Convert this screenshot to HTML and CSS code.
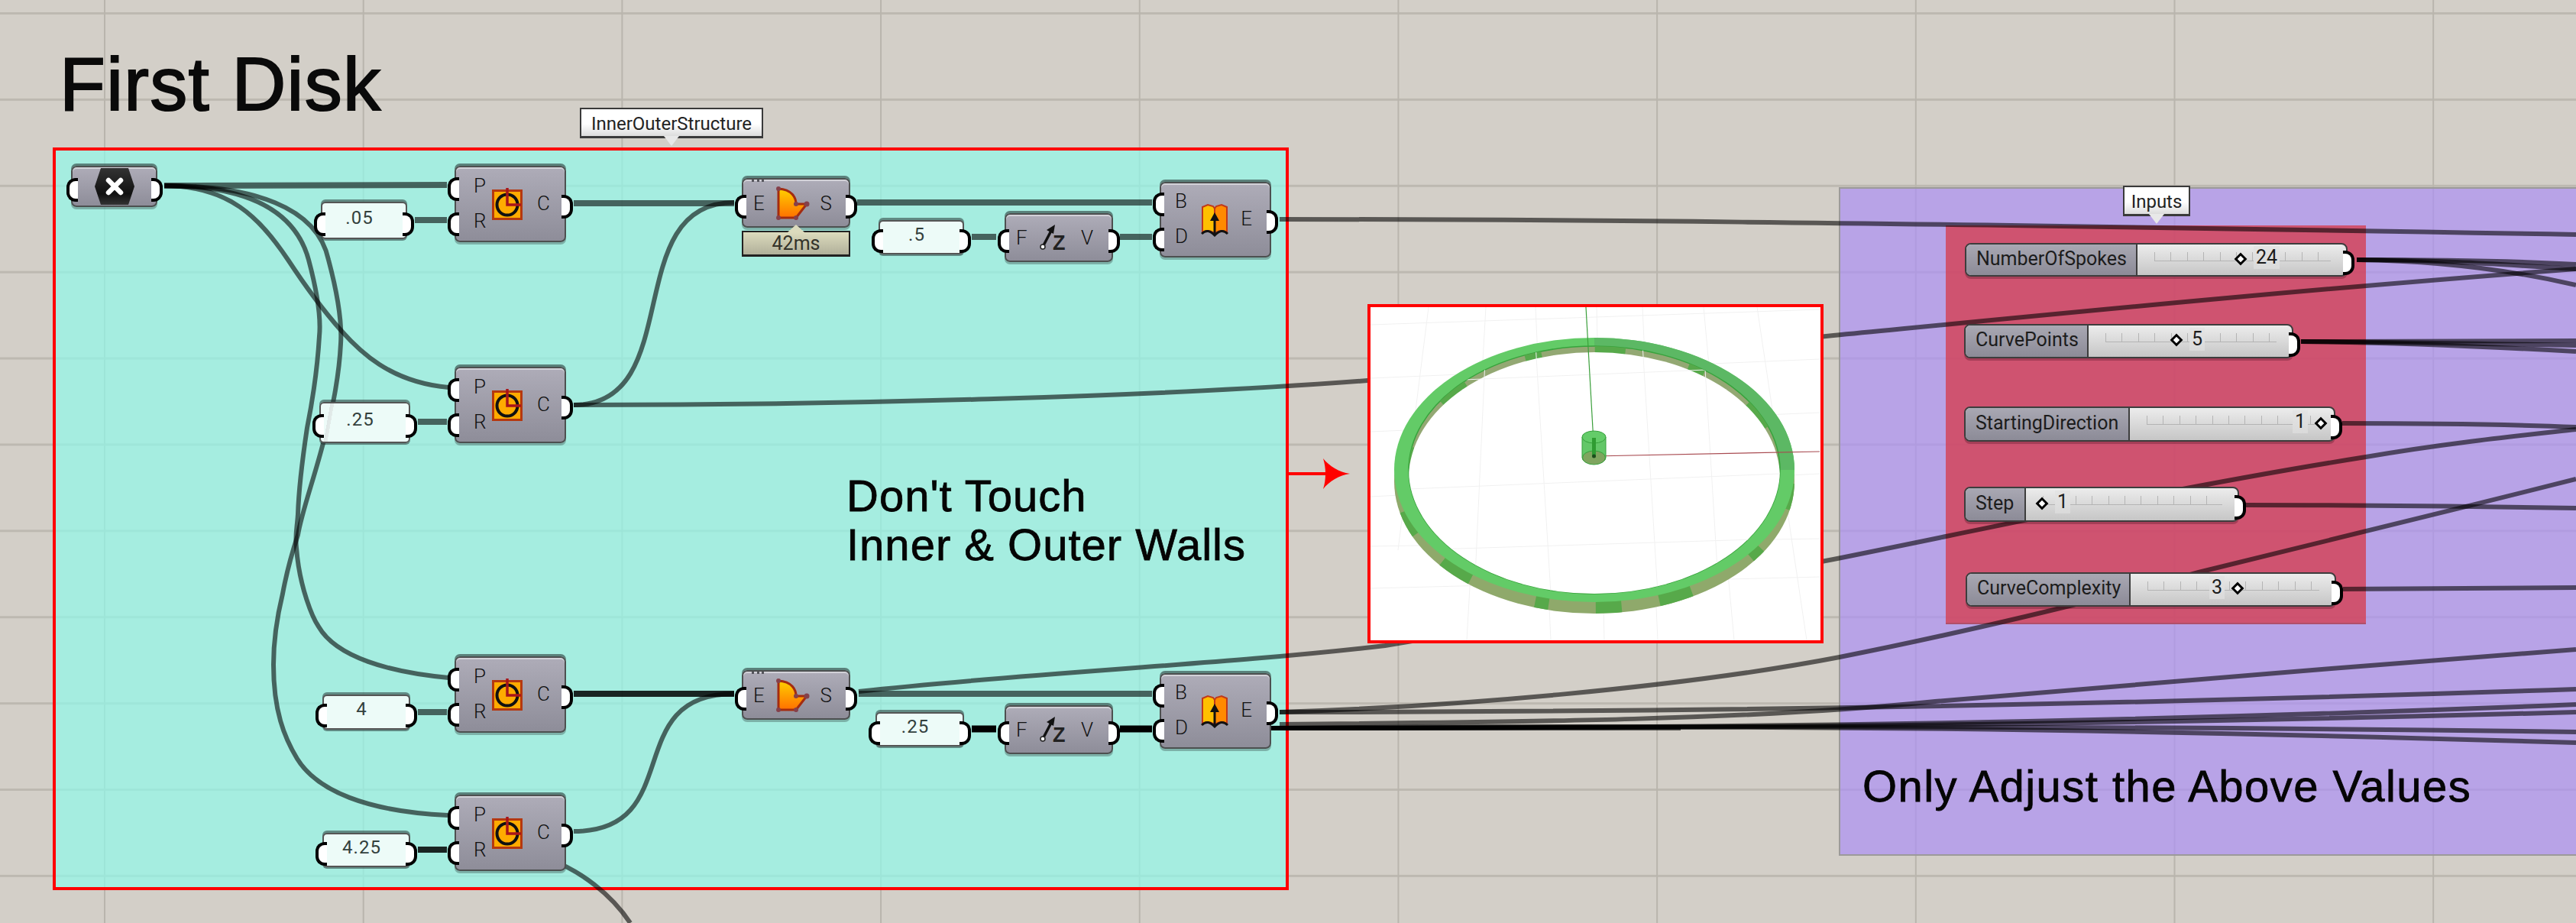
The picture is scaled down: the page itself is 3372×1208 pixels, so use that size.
FILE: index.html
```html
<!DOCTYPE html>
<html lang="en">
<head>
    <meta charset="UTF-8">
    <title>First Disk</title>
    <link rel="stylesheet" href="styles.css">
</head>
<body>
<svg class="sprites" width="0" height="0">
    <defs>
        <linearGradient id="amber" x1="0" y1="0" x2="0" y2="1">
            <stop offset="0" stop-color="#ffd000"/>
            <stop offset="1" stop-color="#ff7000"/>
        </linearGradient>
        <linearGradient id="hexfill" x1="0" y1="0" x2="0" y2="1">
            <stop offset="0" stop-color="#333"/>
            <stop offset=".7" stop-color="#111"/>
            <stop offset="1" stop-color="#333"/>
        </linearGradient>
        <clipPath id="holeclip"><ellipse cx="2087" cy="615" rx="243" ry="162"/></clipPath>
        <clipPath id="lowerclip"><ellipse cx="2087" cy="630" rx="262" ry="173"/></clipPath>
    </defs>
    <symbol id="ic-circle" viewBox="0 0 40 44">
        <rect x="1.5" y="4.5" width="37" height="37" fill="#ffab00" stroke="#b5380f" stroke-width="3"/>
        <circle cx="20" cy="23" r="13.5" fill="none" stroke="#111" stroke-width="4"/>
        <path d="M20 1V23H38" fill="none" stroke="#a8141a" stroke-width="3.5"/>
    </symbol>
    <symbol id="ic-eval" viewBox="0 0 48 46">
        <path d="M6 4C24 5 29 16 29 24L43 24L29 42H6Z" fill="url(#amber)" stroke="#a32c10" stroke-width="3" stroke-linejoin="round"/>
        <g fill="#85404a"><circle cx="6" cy="4" r="3"/><circle cx="29" cy="24" r="3"/><circle cx="43" cy="24" r="3.5"/><circle cx="29" cy="42" r="3"/><circle cx="6" cy="42" r="3"/></g>
    </symbol>
    <symbol id="ic-move" viewBox="0 0 36 34">
        <path d="M4 29L15 8" stroke="#111" stroke-width="3.5"/>
        <path d="M20 0L9 7L18 12Z" fill="#111"/>
        <circle cx="4" cy="29" r="3" fill="#fff" stroke="#222" stroke-width="1.5"/>
    </symbol>
    <symbol id="ic-book" viewBox="0 0 36 44">
        <path d="M2 5L9 2L16 4L18 7V39L16 38C11 35 7 35 2 38Z" fill="#ffc000" stroke="#c0391b" stroke-width="2"/>
        <path d="M34 5L27 2L20 4L18 7V39L20 38C25 35 29 35 34 38Z" fill="#ff8a00" stroke="#c0391b" stroke-width="2"/>
        <path d="M1 40C7 34 12 36 18 42C24 36 29 34 35 40" fill="none" stroke="#111" stroke-width="3"/>
        <path d="M18 42V20" stroke="#111" stroke-width="3"/>
        <path d="M18 12L12 23H24Z" fill="#111"/>
    </symbol>
</svg>

<div class="canvas">
    <div class="group group-teal"></div>
    <div class="group group-purple"></div>
    <div class="group group-red"></div>

    <svg class="wires" width="3372" height="1208" viewBox="0 0 3372 1208">
        <!-- from the hexagon param -->
        <path class="wire thick" d="M215 243L585 242"/>
        <path class="wire" d="M215 243C300 243 340 285 377 340C402 378 422 405 446 432C470 459 510 500 587 507"/>
        <path class="wire" d="M215 243C315 243 385 270 404 340C416 385 420 420 418 440C415 490 408 530 402 560C396 600 391 640 390 673C389 690 386 700 388 717C392 770 410 810 417 820C440 860 510 880 587 887"/>
        <path class="wire" d="M215 243C330 243 415 270 430 340C442 385 448 420 446 450C444 490 435 540 423 580C410 630 395 670 390 700C380 730 375 750 370 777C362 810 358 840 358 870C358 930 372 965 389 993C415 1035 480 1062 586 1067"/>

        <!-- top row -->
        <path class="wire thick" d="M543 288H585"/>
        <path class="wire thick" d="M547 552H585"/>
        <path class="wire thick" d="M751 266H961"/>
        <path class="wire" d="M751 530C900 530 810 265 961 265"/>
        <path class="wire thick" d="M1122 265H1508"/>
        <path class="wire thick" d="M1272 310H1304"/>
        <path class="wire thick" d="M1466 310H1508"/>

        <!-- bottom row -->
        <path class="wire thick" d="M547 932H585"/>
        <path class="wire dark" d="M547 1112H585"/>
        <path class="wire dark" d="M751 908H961"/>
        <path class="wire" d="M751 1088C900 1088 810 908 961 908"/>
        <path class="wire" d="M720 1125C760 1140 800 1170 825 1208"/>
        <path class="wire thick" d="M1124 908H1508"/>
        <path class="wire black" d="M1272 954H1304"/>
        <path class="wire black" d="M1466 954H1508"/>

        <!-- long runs to the right -->
        <path class="wire" d="M1675 287C2000 287 2400 290 3372 307"/>
        <path class="wire" d="M751 530C1100 530 1500 520 1790 498C1990 482 2200 460 2400 439C2700 410 3000 380 3372 352"/>
        <path class="wire" d="M1124 905C1350 880 1600 870 1813 845C2000 815 2200 770 2400 732C2600 692 2850 637 3097 598C3200 580 3300 570 3372 562"/>
        <path class="wire" d="M1675 932C1900 925 2200 900 2408 860C2560 830 2750 785 2878 749C3000 720 3200 670 3372 627"/>
        <path class="wire" d="M1675 932C2100 932 2700 925 3372 902"/>
        <path class="wire" d="M1675 948C2000 945 2300 942 2533 918C2750 900 3100 870 3372 850"/>
        <path class="wire" d="M1660 953C2300 953 2800 945 3372 922"/>
        <path class="wire" d="M1660 953C2300 953 2800 948 3372 932"/>
        <path class="wire" d="M1660 953C2300 950 2800 950 3372 958"/>
        <path class="wire" d="M1660 953C2300 947 2800 955 3372 972"/>
        <path class="wire" d="M1660 953H2200"/>

        <!-- slider outputs -->
        <path class="wire" d="M3085 340C3200 340 3300 342 3372 346"/>
        <path class="wire" d="M3085 340C3180 341 3280 352 3372 373"/>
        <path class="wire" d="M3085 340C3200 340 3300 348 3372 352"/>
        <path class="wire" d="M3012 447C3150 447 3300 447 3372 446"/>
        <path class="wire" d="M3012 447C3150 448 3280 455 3372 460"/>
        <path class="wire" d="M3012 447C3100 447 3200 449 3372 452"/>
        <path class="wire" d="M3066 554C3200 554 3300 556 3372 559"/>
        <path class="wire" d="M2940 661C3100 661 3250 663 3372 665"/>
        <path class="wire" d="M3067 771C3200 771 3300 770 3372 769"/>
    </svg>

    <h1 class="title">First Disk</h1>

    <div class="balloon balloon-structure">InnerOuterStructure</div>
    <div class="balloon balloon-inputs">Inputs</div>

    <!-- param -->
    <div class="node param n-param">
        <svg class="hex" width="52" height="50" viewBox="0 0 52 50">
            <path d="M8 1H44L52 25L44 49H8L0 25Z" fill="url(#hexfill)"/>
            <path d="M18 17L34 33M34 17L18 33" stroke="#fff" stroke-width="6.5" stroke-linecap="round"/>
        </svg>
    </div>

    <!-- panels -->
    <div class="panel p-05">.05</div>
    <div class="panel p-25">.25</div>
    <div class="panel p-4">4</div>
    <div class="panel p-425">4.25</div>
    <div class="panel p-5">.5</div>
    <div class="panel p-25b">.25</div>

    <!-- circles -->
    <div class="node circle n-c1">
        <div class="pins"><span class="pin">P</span><span class="pin">R</span></div>
        <svg class="icon" width="40" height="44"><use href="#ic-circle"/></svg>
        <div class="pins out"><span class="pin">C</span></div>
    </div>
    <div class="node circle n-c2">
        <div class="pins"><span class="pin">P</span><span class="pin">R</span></div>
        <svg class="icon" width="40" height="44"><use href="#ic-circle"/></svg>
        <div class="pins out"><span class="pin">C</span></div>
    </div>
    <div class="node circle n-c3">
        <div class="pins"><span class="pin">P</span><span class="pin">R</span></div>
        <svg class="icon" width="40" height="44"><use href="#ic-circle"/></svg>
        <div class="pins out"><span class="pin">C</span></div>
    </div>
    <div class="node circle n-c4">
        <div class="pins"><span class="pin">P</span><span class="pin">R</span></div>
        <svg class="icon" width="40" height="44"><use href="#ic-circle"/></svg>
        <div class="pins out"><span class="pin">C</span></div>
    </div>

    <!-- surface evaluators -->
    <div class="node eval n-e1">
        <div class="pins"><span class="pin">E</span></div>
        <svg class="icon" width="48" height="46"><use href="#ic-eval"/></svg>
        <div class="pins out"><span class="pin">S</span></div>
    </div>
    <div class="timer">42ms</div>
    <div class="node eval n-e2">
        <div class="pins"><span class="pin">E</span></div>
        <svg class="icon" width="48" height="46"><use href="#ic-eval"/></svg>
        <div class="pins out"><span class="pin">S</span></div>
    </div>

    <!-- z vectors -->
    <div class="node zvec n-z1">
        <div class="pins"><span class="pin">F</span></div>
        <svg class="icon" width="38" height="44" viewBox="0 0 38 44"><use href="#ic-move" width="36" height="34" y="4"/><text class="ic-z" x="17" y="37">Z</text></svg>
        <div class="pins out"><span class="pin">V</span></div>
    </div>
    <div class="node zvec n-z2">
        <div class="pins"><span class="pin">F</span></div>
        <svg class="icon" width="38" height="44" viewBox="0 0 38 44"><use href="#ic-move" width="36" height="34" y="4"/><text class="ic-z" x="17" y="37">Z</text></svg>
        <div class="pins out"><span class="pin">V</span></div>
    </div>

    <!-- extrudes -->
    <div class="node extrude n-x1">
        <div class="pins"><span class="pin">B</span><span class="pin">D</span></div>
        <svg class="icon" width="36" height="44"><use href="#ic-book"/></svg>
        <div class="pins out"><span class="pin">E</span></div>
    </div>
    <div class="node extrude n-x2">
        <div class="pins"><span class="pin">B</span><span class="pin">D</span></div>
        <svg class="icon" width="36" height="44"><use href="#ic-book"/></svg>
        <div class="pins out"><span class="pin">E</span></div>
    </div>

    <div class="note note-touch">Don't Touch<br>Inner &amp; Outer Walls</div>
    <div class="note note-adjust">Only Adjust the Above Values</div>

    <svg class="arrow" width="84" height="44" viewBox="0 0 84 44">
        <path d="M0 20H52V24H0Z" fill="#f00"/>
        <path d="M80 22C66 24 53 32 45 42C49 30 49 14 45 2C53 12 66 20 80 22Z" fill="#f00"/>
    </svg>

    <!-- rhino viewport capture -->
    <div class="render">
        <svg width="589" height="436" viewBox="1794 402 589 436">
            <g class="viewgrid">
                <path d="M1794 425L2382 405M1794 495L2382 470M1794 565L2382 540M1794 650L2382 620M1794 715L2382 705M1794 770L2382 755"/>
                <path d="M1830 720L1870 402M1920 838L1945 402M2030 838L2010 402M2100 838L2090 402M2170 838L2150 402M2270 838L2230 402M2365 838L2300 402"/>
            </g>
            <ellipse cx="2087" cy="630" rx="262" ry="173" fill="#8fa96b"/>
            <g clip-path="url(#lowerclip)">
                <ellipse class="patches" cx="2087" cy="633" rx="257" ry="163"/>
            </g>
            <ellipse cx="2087" cy="615" rx="262" ry="173" fill="#63cb67"/>
            <path d="M2349 615A262 173 0 0 0 2087 442L2087 453A243 162 0 0 1 2330 615Z" fill="#5cb864"/>
            <ellipse cx="2087" cy="615" rx="243" ry="162" fill="#93a873" stroke="#37a33c" stroke-width="1.5"/>
            <g clip-path="url(#holeclip)">
                <ellipse class="patches inner" cx="2087" cy="618" rx="243" ry="160"/>
            </g>
            <ellipse cx="2087" cy="626" rx="243" ry="165" fill="#fff" clip-path="url(#holeclip)"/>
            <g class="viewgrid" clip-path="url(#holeclip)">
                <path d="M1844 640L2330 620M1844 500L2330 480M1844 720L2330 705M1930 777L1945 450M2030 777L2010 450M2170 777L2150 450M2250 777L2230 450"/>
            </g>
            <path d="M2076 402L2087 597" stroke="#3ca03c" stroke-width="1.2" fill="none"/>
            <path d="M2087 597L2382 591" stroke="#a84a50" stroke-width="1.2" fill="none"/>
            <path d="M2071 572V599A15.5 8 0 0 0 2102 599V572Z" fill="#63c768" stroke="#36a03c"/>
            <ellipse cx="2086.500" cy="572" rx="15.500" ry="8" fill="#64cc69" stroke="#36a03c"/>
            <ellipse cx="2086.500" cy="599" rx="15" ry="9" fill="#7fa55f" stroke="#36a03c"/>
            <rect x="2084" y="573" width="5" height="24" fill="#2f9c32"/>
            <circle cx="2086.500" cy="597" r="2.500" fill="#1b4d1b"/>
        </svg>
    </div>

    <!-- sliders -->
    <div class="slider s-spokes">
        <span class="slider-name">NumberOfSpokes</span>
        <div class="slider-track"><div class="rail"></div><div class="readout"><i class="thumb"></i><span>24</span></div></div>
    </div>
    <div class="slider s-points">
        <span class="slider-name">CurvePoints</span>
        <div class="slider-track"><div class="rail"></div><div class="readout"><i class="thumb"></i><span>5</span></div></div>
    </div>
    <div class="slider s-start">
        <span class="slider-name">StartingDirection</span>
        <div class="slider-track"><div class="rail"></div><div class="readout flip"><i class="thumb"></i><span>1</span></div></div>
    </div>
    <div class="slider s-step">
        <span class="slider-name">Step</span>
        <div class="slider-track"><div class="rail"></div><div class="readout"><i class="thumb"></i><span>1</span></div></div>
    </div>
    <div class="slider s-complex">
        <span class="slider-name">CurveComplexity</span>
        <div class="slider-track"><div class="rail"></div><div class="readout flip"><i class="thumb"></i><span>3</span></div></div>
    </div>
</div>
</body>
</html>
```

FILE: styles.css
```css
* {
    box-sizing: border-box;
}
html, body {
    margin: 0;
    padding: 0;
    overflow: hidden;
}
.sprites {
    position: absolute;
}
.canvas {
    position: relative;
    width: 3372px;
    height: 1208px;
    overflow: hidden;
    font-family: Roboto, "Liberation Sans", sans-serif;
    background-color: #d3cfc8;
    background-image:
        linear-gradient(to right, #b9b5ad 2px, transparent 2px),
        linear-gradient(to bottom, #bdb9b1 3px, transparent 3px);
    background-size: 338.7px 112.9px;
    background-position: 136px 16px;
}

/* groups */
.group {
    position: absolute;
}
.group-teal {
    left: 69px;
    top: 193px;
    width: 1618px;
    height: 972px;
    background: rgba(145, 250, 234, .7);
    border: 4px solid #f00;
}
.group-purple {
    left: 2407px;
    top: 245px;
    width: 965px;
    height: 875px;
    background: rgba(173, 144, 243, .7);
    border: 2px solid #9c9a9a;
    border-right: none;
}
.group-red {
    left: 2547px;
    top: 295px;
    width: 550px;
    height: 522px;
    background: rgba(213, 62, 82, .8);
    border-bottom: 2px solid #b0506a;
}

/* wires */
.wires {
    position: absolute;
    left: 0;
    top: 0;
}
.wire {
    fill: none;
    stroke: #000;
    stroke-opacity: .58;
    stroke-width: 6;
}
.wire.thick {
    stroke-width: 8;
}
.wire.dark {
    stroke-width: 8;
    stroke-opacity: .85;
}
.wire.black {
    stroke-width: 9;
    stroke-opacity: 1;
}

/* big labels */
.title {
    position: absolute;
    left: 78px;
    top: 54px;
    margin: 0;
    font: 400 98px/112px "Liberation Sans", sans-serif;
    letter-spacing: 1.3px;
    color: #0a0a0a;
    -webkit-text-stroke: 2px #0a0a0a;
}
.note {
    position: absolute;
    font-family: "Liberation Sans", sans-serif;
    font-size: 58px;
    line-height: 64px;
    color: #050505;
    white-space: nowrap;
    -webkit-text-stroke: .8px #050505;
}
.note-touch {
    left: 1108px;
    top: 617px;
    letter-spacing: 1px;
}
.note-adjust {
    left: 2438px;
    top: 997px;
    letter-spacing: 1.45px;
}

/* balloons over groups */
.balloon {
    position: absolute;
    height: 40px;
    padding-top: 5px;
    text-align: center;
    font-size: 24px;
    line-height: 28px;
    color: #222;
    background: linear-gradient(#fff 55%, #dcdcdc);
    border: 2px solid #3a3a3a;
    border-bottom-width: 3px;
}
.balloon::after {
    content: "";
    position: absolute;
    left: 50%;
    top: 100%;
    margin-left: -10px;
    border: 10px solid transparent;
    border-top: 13px solid #e8e8e8;
    border-bottom: none;
}
.balloon-structure {
    left: 759px;
    top: 141px;
    width: 240px;
}
.balloon-inputs {
    left: 2779px;
    top: 243px;
    width: 88px;
}

/* components */
.node {
    position: absolute;
    display: flex;
    align-items: center;
    justify-content: space-between;
    background: linear-gradient(#aeacb8, #8e8d99);
    border: 2px solid #4d5050;
    border-radius: 7px;
    box-shadow: 0 -3px 0 rgba(30, 40, 40, .55), 0 3px 0 rgba(30, 40, 40, .3), inset 0 2px 0 rgba(255, 255, 255, .45);
    font-size: 26px;
    font-weight: 300;
    color: #111;
}
.pins {
    display: flex;
    flex-direction: column;
    justify-content: center;
    gap: 24px;
    align-self: stretch;
}
.pin {
    position: relative;
    height: 22px;
    line-height: 22px;
    padding-left: 16px;
}
.pins.out .pin {
    padding-left: 0;
    padding-right: 26px;
}
.pin::before,
.node.param::before,
.node.param::after,
.panel::before,
.panel::after {
    content: "";
    position: absolute;
    top: 50%;
    width: 11px;
    height: 23px;
    margin-top: -11px;
    background: #fff;
    border: 4px solid #000;
}
.pin::before,
.node.param::before,
.panel::before {
    left: -11px;
    border-right: none;
    border-radius: 12px 0 0 12px;
}
.pins.out .pin::before,
.node.param::after,
.panel::after {
    left: auto;
    right: -11px;
    border: 4px solid #000;
    border-left: none;
    border-radius: 0 12px 12px 0;
}
.node.param::before {
    left: -8px;
}
.node.param::after {
    right: -9px;
}
.icon {
    flex: none;
    display: block;
}
.ic-z {
    font: 700 27px "Liberation Sans", sans-serif;
    fill: #222;
}

.param {
    justify-content: center;
    width: 113px;
    height: 54px;
    left: 93px;
    top: 217px;
}
.hex {
    display: block;
}

.circle {
    width: 146px;
    height: 100px;
    left: 595px;
}
.circle .pins {
    padding-bottom: 3px;
}
.circle .pin {
    padding-left: 23px;
}
.circle .pins.out .pin {
    padding-left: 0;
    padding-right: 19px;
}
.circle .icon {
    margin-right: 12px;
}
.n-c1 { top: 217px; }
.n-c2 { top: 480px; }
.n-c3 { top: 859px; }
.n-c4 { top: 1040px; }

.eval {
    width: 142px;
    height: 65px;
    left: 971px;
}
.eval .pin {
    padding-left: 13px;
}
.eval .pins.out .pin {
    padding-left: 0;
    padding-right: 22px;
}
.eval::before {
    content: "";
    position: absolute;
    left: 11px;
    top: 0;
    width: 16px;
    border-top: 3px dotted #55555c;
}
.n-e1 { top: 233px; }
.n-e2 { top: 877px; }

.timer {
    position: absolute;
    left: 971px;
    top: 302px;
    width: 142px;
    height: 34px;
    text-align: center;
    font-size: 25px;
    line-height: 30px;
    color: #33332a;
    background: linear-gradient(#dcdbbd, #b1b09a);
    border: 2px solid #222;
    border-bottom-width: 3px;
}
.timer::before {
    content: "";
    position: absolute;
    left: 50%;
    bottom: 100%;
    margin-left: -11px;
    border: 11px solid transparent;
    border-bottom: 10px solid #dcdbbd;
    border-top: none;
}

.zvec {
    width: 142px;
    height: 64px;
    left: 1315px;
}
.zvec .pin {
    padding-left: 13px;
}
.zvec .pins.out .pin {
    padding-left: 0;
    padding-right: 24px;
}
.zvec .icon {
    margin-top: 2px;
}
.n-z1 { top: 279px; }
.n-z2 { top: 923px; }

.extrude {
    width: 146px;
    height: 99px;
    left: 1518px;
}
.extrude .pins {
    padding-bottom: 4px;
}
.extrude .pin {
    padding-left: 18px;
}
.extrude .pins.out .pin {
    padding-left: 0;
    padding-right: 23px;
}
.n-x1 { top: 238px; }
.n-x2 { top: 881px; }

/* number panels */
.panel {
    position: absolute;
    display: flex;
    align-items: center;
    justify-content: center;
    padding: 0 12px 8px 0;
    background: #edfbf8;
    border: 2px solid #555;
    border-radius: 6px;
    box-shadow: 0 -3px 0 rgba(30, 40, 40, .5), 0 2px 0 rgba(30, 40, 40, .5);
    font-size: 24px;
    letter-spacing: 1px;
    color: #33403d;
}
.p-05 { left: 420px; top: 264px; width: 113px; height: 49px; }
.p-25 { left: 418px; top: 526px; width: 119px; height: 54px; background: linear-gradient(100deg, #edfbf8 10%, #dfe7e6 10%, #e3ecea 14%, #edfbf8 14%); }
.p-4 { left: 422px; top: 909px; width: 115px; height: 46px; }
.p-425 { left: 422px; top: 1090px; width: 115px; height: 45px; }
.p-5 { left: 1150px; top: 288px; width: 112px; height: 45px; }
.p-25b { left: 1146px; top: 932px; width: 116px; height: 45px; }

/* arrow and viewport capture */
.arrow {
    position: absolute;
    left: 1687px;
    top: 598px;
}
.render {
    position: absolute;
    left: 1790px;
    top: 398px;
    width: 597px;
    height: 444px;
    background: #fff;
    border: 4px solid #f00;
}
.render svg {
    display: block;
}
.viewgrid {
    fill: none;
    stroke: #f1f1f1;
    stroke-width: 1;
}
.patches {
    fill: none;
    stroke: #57a94a;
    stroke-width: 24;
    stroke-dasharray: 34 62 18 90 44 50;
}
.patches.inner {
    stroke-width: 14;
    stroke-dasharray: 22 70 40 85;
}

/* number sliders */
.slider {
    position: absolute;
    display: flex;
    background: linear-gradient(#ececec, #c6c6c6);
    border: 2px solid #3d3d3d;
    border-radius: 8px;
    box-shadow: 0 3px 0 rgba(40, 0, 10, .25);
    font-size: 25px;
    color: #1c1c1c;
}
.slider::after {
    content: "";
    position: absolute;
    right: -11px;
    top: 50%;
    width: 11px;
    height: 24px;
    margin-top: -12px;
    background: #fff;
    border: 4px solid #000;
    border-left: none;
    border-radius: 0 12px 12px 0;
}
.slider-name {
    flex: none;
    display: flex;
    align-items: center;
    padding: 0 0 4px 13px;
    background: linear-gradient(#a9a8b3, #8c8b97);
    border-right: 2px solid #3d3d3d;
    border-radius: 6px 0 0 6px;
    white-space: nowrap;
}
.slider-track {
    position: relative;
    flex: 1;
}
.rail {
    position: absolute;
    left: 22px;
    right: 20px;
    top: 10px;
    height: 12px;
    border-bottom: 1px solid #b4b4b4;
    background: repeating-linear-gradient(90deg, #b4b4b4 0 1px, transparent 1px 21.4px);
}
.readout {
    position: absolute;
    top: 0;
    bottom: 3px;
    display: flex;
    align-items: center;
    gap: 9px;
    padding: 0 4px;
}
.readout span {
    line-height: 30px;
    margin-top: -3px;
    background: linear-gradient(#e4e4e4, #dadada);
    padding: 0 3px;
}
.thumb {
    display: block;
    flex: none;
    width: 12px;
    height: 12px;
    margin: 0 2px;
    background: #fff;
    border: 3px solid #000;
    transform: rotate(45deg);
}
.s-spokes { left: 2572px; top: 318px; width: 501px; height: 44px; }
.s-spokes .slider-name { width: 224px; }
.s-spokes .readout { left: 123px; }
.s-points { left: 2571px; top: 424px; width: 431px; height: 45px; }
.s-points .slider-name { width: 161px; }
.s-points .readout { left: 103px; }
.s-start { left: 2571px; top: 532px; width: 486px; height: 46px; }
.s-start .slider-name { width: 215px; }
.s-start .readout { right: 5px; flex-direction: row-reverse; }
.s-step { left: 2571px; top: 637px; width: 360px; height: 46px; }
.s-step .slider-name { width: 79px; }
.s-step .readout { left: 9px; }
.s-complex { left: 2573px; top: 749px; width: 485px; height: 45px; }
.s-complex .slider-name { width: 214px; }
.s-complex .readout { right: 115px; flex-direction: row-reverse; }
```
